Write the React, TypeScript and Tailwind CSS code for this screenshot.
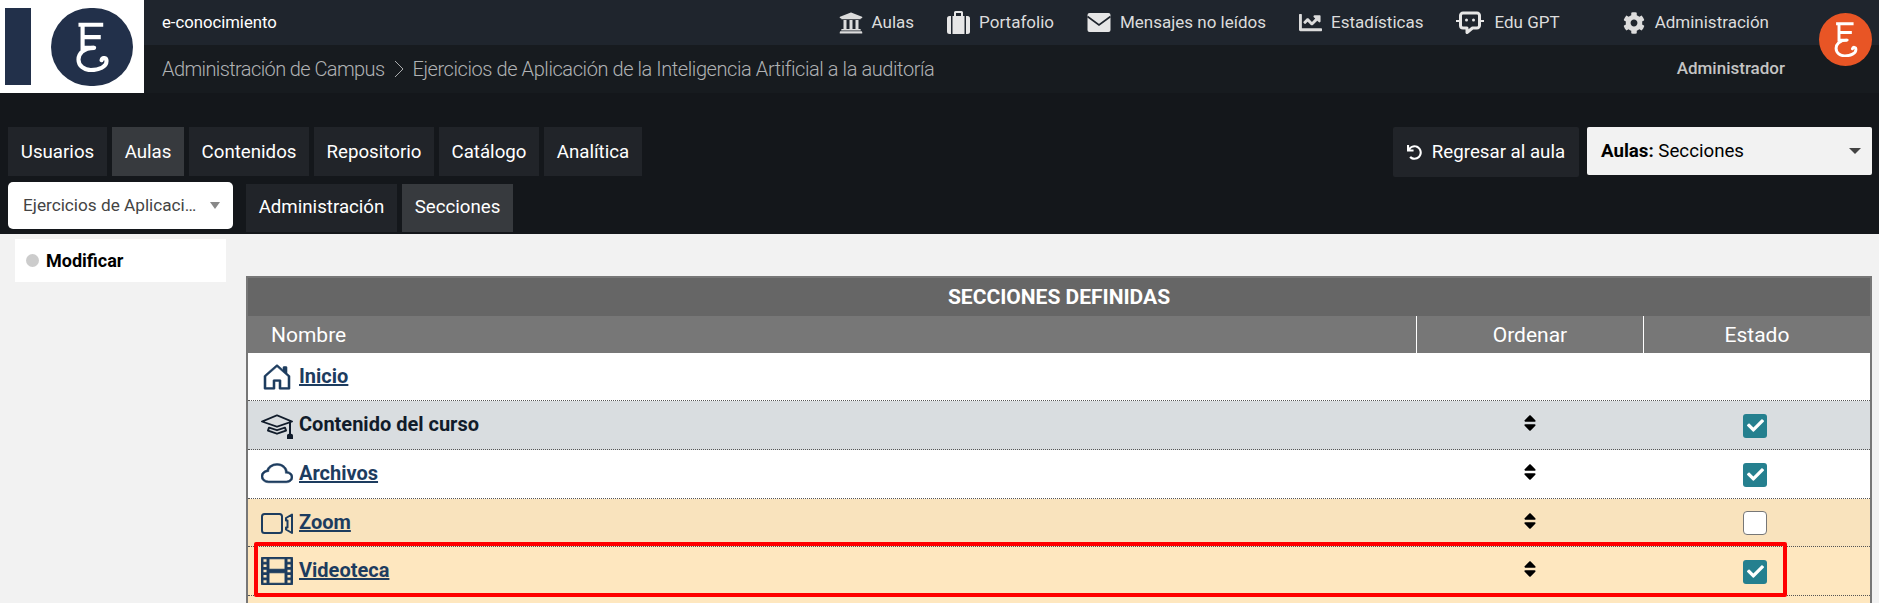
import React from "react";
import { FaCheck, FaChartLine, FaCog, FaSort, FaUndo, FaUniversity } from "react-icons/fa";
import { BsCloud, BsFilm, BsHouseDoor, BsMortarboard } from "react-icons/bs";

const PortfolioIcon = () => (
  <svg width="23" height="24" viewBox="0 0 23 24" fill="#e6e6e6">
    <path d="M4 5v18H2.500A2.500 2.500 0 0 1 0 20.500V7.500A2.500 2.500 0 0 1 2.500 5z" />
    <path d="M19 5v18h1.500A2.500 2.500 0 0 0 23 20.500V7.500A2.500 2.500 0 0 0 20.500 5z" />
    <path d="M7 1.500A1.500 1.500 0 0 1 8.500 0h6A1.500 1.500 0 0 1 16 1.500V5h1.500v18h-12V5H7zM9 2v3h5V2z" />
  </svg>
);

const EnvelopeIcon = () => (
  <svg width="24" height="21" viewBox="0 0 24 21">
    <rect x="0.500" y="1" width="23" height="19" rx="2" fill="#e6e6e6" />
    <path d="M0.500 4.500 12 13l11.500-8.500" fill="none" stroke="#1f252d" strokeWidth="1.600" />
  </svg>
);

const BotIcon = () => (
  <svg width="28" height="24" viewBox="0 0 28 24" fill="none">
    <path d="M7 2h14a2.500 2.500 0 0 1 2.500 2.500v10a2.500 2.500 0 0 1-2.500 2.500h-4.500L11 21.500V17H7a2.500 2.500 0 0 1-2.500-2.500v-10A2.500 2.500 0 0 1 7 2z" fill="#1f252d" stroke="#e6e6e6" strokeWidth="3" strokeLinejoin="round" />
    <path d="M0.500 10H4M24 10h3.500" stroke="#e6e6e6" strokeWidth="2" strokeLinecap="round" />
    <circle cx="10.500" cy="9" r="1.500" fill="#e6e6e6" />
    <circle cx="17.500" cy="9" r="1.500" fill="#e6e6e6" />
  </svg>
);

const VideoIcon = ({ className }: { className?: string }) => (
  <svg className={className} viewBox="0 0 32 28" fill="none" stroke="currentColor" strokeWidth="2" strokeLinejoin="round">
    <rect x="1" y="5" width="20" height="19" rx="2.500" />
    <path d="M31 5.500v18.500l-6-3.500v-2h1.500v-7H25v-2.500z" />
  </svg>
);

const Monogram = ({ className }: { className?: string }) => (
  <svg className={className} viewBox="0 0 40 60" fill="none" stroke="#fff">
    <path d="M3 3h30M8 3v28h14M8 18h22" strokeWidth="5" />
    <path d="M22 31C8 31 3 39 3 45c0 8 7 13 15 13 10 0 19-4 19-11 0-4-5-5-6-1" strokeWidth="5" strokeLinecap="round" />
  </svg>
);

const navItems = [
  { label: "Aulas", icon: <FaUniversity size={24} /> },
  { label: "Portafolio", icon: <PortfolioIcon /> },
  { label: "Mensajes no leídos", icon: <EnvelopeIcon /> },
  { label: "Estadísticas", icon: <FaChartLine size={23} /> },
];

const mainTabs = [
  { label: "Usuarios", w: "w-[99px]" },
  { label: "Aulas", w: "w-[72px]", active: true },
  { label: "Contenidos", w: "w-[120px]" },
  { label: "Repositorio", w: "w-[120px]" },
  { label: "Catálogo", w: "w-[100px]" },
  { label: "Analítica", w: "w-[98px]" },
];

const iconClass = "text-[#1d3c5f] w-[32px] h-[28px] shrink-0";

const rows = [
  { name: "Inicio", icon: <BsHouseDoor className={iconClass} preserveAspectRatio="none" stroke="currentColor" strokeWidth={0.3} />, bg: "bg-white", h: "h-[48px]", link: true },
  { name: "Contenido del curso", icon: <BsMortarboard className="text-[#111c2b] w-[32px] h-[28px] shrink-0" preserveAspectRatio="none" />, bg: "bg-[#d9dde0]", h: "h-[49px]", sort: true, state: true },
  { name: "Archivos", icon: <BsCloud className={iconClass} preserveAspectRatio="none" stroke="currentColor" strokeWidth={0.3} />, bg: "bg-white", h: "h-[49px]", link: true, sort: true, state: true },
  { name: "Zoom", icon: <VideoIcon className={iconClass} />, bg: "bg-[#f9e3bd]", h: "h-[48px]", link: true, sort: true, state: false },
  { name: "Videoteca", icon: <BsFilm className={iconClass} preserveAspectRatio="none" stroke="currentColor" strokeWidth={0.5} />, bg: "bg-[#fee7bf]", h: "h-[49px]", link: true, sort: true, state: true },
];

const Row = ({ row }: { row: (typeof rows)[number] }) => (
  <div className={`flex items-center border-b border-dotted border-[#555] ${row.bg} ${row.h}`}>
    <div className="flex flex-1 items-center gap-[6px] pl-[13px]">
      {row.icon}
      {row.link ? (
        <a className="-mt-[2px] text-[20px] font-bold text-[#1d3c5f] underline">{row.name}</a>
      ) : (
        <span className="-mt-[2px] text-[20px] font-bold text-[#111c2b]">{row.name}</span>
      )}
    </div>
    <div className="flex w-[227px] justify-center">
      {row.sort && <FaSort size={20} className="text-black -mt-[4px]" />}
    </div>
    <div className="flex w-[227px] pl-[100px]">
      {row.state === true && (
        <span className="mt-[1px] flex h-[24px] w-[24px] items-center justify-center rounded-[3px] bg-[#25808f]">
          <FaCheck size={17} className="text-white" />
        </span>
      )}
      {row.state === false && (
        <span className="mt-[1px] h-[24px] w-[24px] rounded-[4px] border border-[#777] bg-white" />
      )}
    </div>
  </div>
);

export default function App() {
  return (
    <div className="h-[603px] overflow-hidden bg-[#f2f2f2] font-['Roboto',sans-serif]">
      <header className="relative h-[234px] bg-[#14171b]">
        <div className="flex h-[93px]">
          <div className="w-[144px] bg-white flex items-center pl-[5px]">
            <div className="h-[77px] w-[26px] bg-[#22304a]" />
            <div className="ml-[20px] flex h-[78px] w-[82px] items-center justify-center rounded-full bg-[#22304a]">
              <Monogram className="h-[50px] w-[33px]" />
            </div>
          </div>
          <div className="flex flex-1 flex-col">
            <div className="flex h-[45px] items-center bg-[#1f252d] pl-[18px] pr-[110px]">
              <span className="text-[16.700px] text-white">e-conocimiento</span>
              <nav className="ml-auto flex items-center gap-[33px] text-[17px] text-[#dcdcdc]">
                {navItems.map((item) => (
                  <a key={item.label} className="flex items-center gap-[9px]">
                    {item.icon}
                    {item.label}
                  </a>
                ))}
                <a className="mr-[30px] flex items-center gap-[10px]">
                  <BotIcon />
                  Edu GPT
                </a>
                <a className="flex items-center gap-[10px]">
                  <FaCog size={22} />
                  Administración
                </a>
              </nav>
            </div>
            <div className="flex h-[48px] items-center bg-[#171b1f] pl-[18px] pr-[94px] text-[#b0b2b4]">
              <span className="text-[20px] font-light tracking-[-0.6px]">Administración de Campus</span>
              <svg width="10" height="18" viewBox="0 0 10 18" className="ml-[10px] mr-[8px]" fill="none" stroke="#a9abad">
                <path d="M1 1l8 8-8 8" />
              </svg>
              <span className="text-[20px] font-light tracking-[-0.42px]">
                Ejercicios de Aplicación de la Inteligencia Artificial a la auditoría
              </span>
              <span className="ml-auto text-[17px] font-medium text-[#c4c4c4]">Administrador</span>
            </div>
          </div>
        </div>
        <div className="absolute right-[7px] top-[13px] flex h-[53px] w-[53px] items-center justify-center rounded-full bg-[#e85525]">
          <Monogram className="h-[35px] w-[24px]" />
        </div>

        <div className="flex items-start pl-[8px] pr-[7px] pt-[34px]">
          <div className="flex gap-[5px]">
            {mainTabs.map((tab) => (
              <a
                key={tab.label}
                className={`flex h-[49px] items-center justify-center pt-[1px] text-[18.700px] text-white ${tab.w} ${tab.active ? "bg-[#373a3e]" : "bg-[#212429]"}`}
              >
                {tab.label}
              </a>
            ))}
          </div>
          <a className="ml-auto flex h-[50px] w-[186px] items-center justify-center gap-[10px] rounded-[2px] bg-[#212429] pt-[1px] text-[18.700px] text-white">
            <FaUndo size={15} />
            Regresar al aula
          </a>
          <div className="ml-[8px] flex h-[48px] w-[285px] items-center justify-between rounded-[2px] bg-[#f2f2f2] pl-[14px] pr-[11px] text-[18.700px] text-black">
            <span>
              <b className="font-bold">Aulas:</b> Secciones
            </span>
            <span className="h-0 w-0 border-x-[6px] border-t-[6px] border-x-transparent border-t-[#444]" />
          </div>
        </div>

        <div className="flex items-start pl-[8px] pt-[5px]">
          <div className="flex h-[47px] w-[225px] items-center rounded-[5px] bg-white pl-[15px] pr-[13px] text-[17.200px] text-[#444]">
            <span className="whitespace-nowrap">Ejercicios de Aplicaci…</span>
            <span className="ml-auto h-0 w-0 border-x-[5px] border-t-[7px] border-x-transparent border-t-[#888]" />
          </div>
          <a className="ml-[13px] mt-[2px] flex h-[48px] w-[151px] items-center justify-center pb-[1px] text-[18.700px] text-white bg-[#212429]">
            Administración
          </a>
          <a className="ml-[5px] mt-[2px] flex h-[48px] w-[111px] items-center justify-center pb-[1px] text-[18.700px] text-white bg-[#373a3e]">
            Secciones
          </a>
        </div>
      </header>

      <main className="flex pr-[7px] pt-[5px]">
        <aside className="ml-[15px] w-[211px] shrink-0">
          <div className="flex h-[43px] items-center gap-[7px] bg-white pl-[11px]">
            <span className="h-[13px] w-[13px] rounded-full bg-[#ccc]" />
            <span className="text-[18px] font-bold text-black">Modificar</span>
          </div>
        </aside>
        <div className="relative ml-[20px] mt-[37px] flex-1 border-2 border-[#777]">
          <div className="flex h-[38px] items-center justify-center bg-[#666] pt-[2px] text-[21px] font-bold text-white">
            SECCIONES DEFINIDAS
          </div>
          <div className="flex h-[37px] items-center bg-[#777] text-[21px] text-white">
            <div className="flex-1 pl-[23px] pt-[2px]">Nombre</div>
            <div className="flex h-full w-[227px] items-center justify-center border-l border-white pt-[2px]">Ordenar</div>
            <div className="flex h-full w-[227px] items-center justify-center border-l border-white pt-[2px]">Estado</div>
          </div>
          {rows.map((row) => (
            <Row key={row.name} row={row} />
          ))}
          <div className="h-[40px] bg-[#fee7bf]" />
          <div className="absolute left-[6px] top-[264px] h-[55px] w-[1533px] rounded-[2px] border-[4px] border-[#ff0000]" />
        </div>
      </main>
    </div>
  );
}
